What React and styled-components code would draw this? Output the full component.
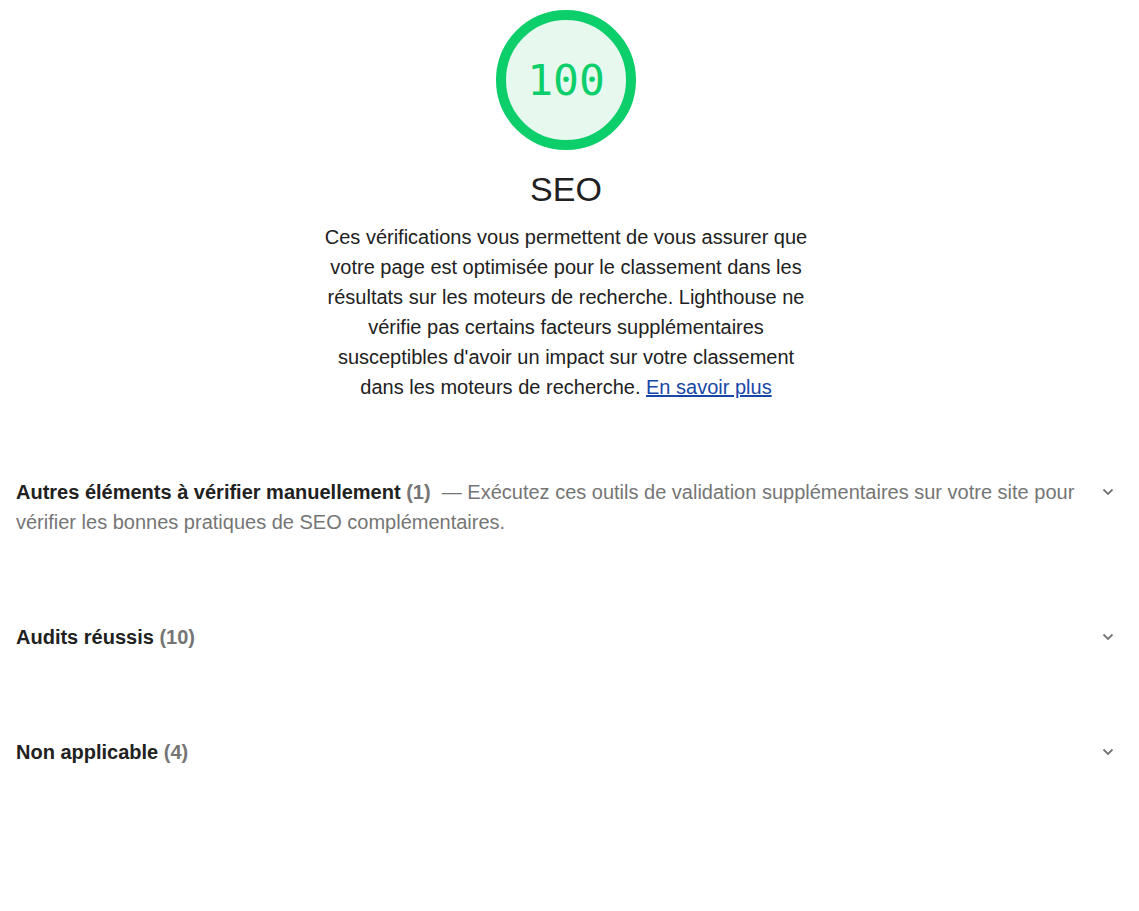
import React from "react";
import styled, { createGlobalStyle } from "styled-components";

const Global = createGlobalStyle`
  html, body { margin: 0; padding: 0; background: #fff; }
  body { font-family: "Liberation Sans", Arial, sans-serif; color: #212121; }
`;

const Page = styled.div`
  padding: 0 23px 0 16px;
  display: flex;
  flex-direction: column;
`;

const Header = styled.div`
  display: flex;
  flex-direction: column;
  align-items: center;
  padding-top: 10px;
`;

const Gauge = styled.div`
  width: 120px;
  height: 120px;
  border-radius: 50%;
  border: 10px solid #0cce6b;
  background: #e7f9ef;
  display: flex;
  align-items: center;
  justify-content: center;
  font-family: "DejaVu Sans Mono", "Liberation Mono", monospace;
  font-size: 43px;
  color: #0cce6b;
`;

const Title = styled.h2`
  margin: 19px 0 0;
  font-weight: 400;
  font-size: 34px;
  line-height: 40px;
  color: #212121;
`;

const Description = styled.p`
  margin: 13px 0 0;
  width: 496px;
  text-align: center;
  font-size: 20px;
  line-height: 30px;
  color: #212121;
`;

const Link = styled.a`
  color: #1747a6;
  text-decoration: underline;
`;

const Groups = styled.div`
  margin-top: 75px;
  display: flex;
  flex-direction: column;
  gap: 85px;
`;

const Group = styled.div`
  display: flex;
  align-items: flex-start;
  justify-content: space-between;
  gap: 20px;
`;

const GroupText = styled.div`
  font-size: 20px;
  line-height: 30px;
  color: #757575;
  max-width: 1068px;
`;

const GroupTitle = styled.span`
  font-weight: 700;
  color: #212121;
`;

const Count = styled.span`
  font-weight: 700;
  color: #757575;
`;

const Chevron = styled.svg`
  flex: none;
  margin-top: 11px;
  margin-right: 2px;
`;

const ChevronIcon = () => (
  <Chevron width="12" height="8" viewBox="0 0 12 8">
    <path d="M1.5 1.5 L6 6 L10.5 1.5" fill="none" stroke="#757575" strokeWidth="1.8" />
  </Chevron>
);

const groups = [
  {
    title: "Autres éléments à vérifier manuellement",
    count: 1,
    desc: "Exécutez ces outils de validation supplémentaires sur votre site pour vérifier les bonnes pratiques de SEO complémentaires.",
  },
  { title: "Audits réussis", count: 10 },
  { title: "Non applicable", count: 4 },
];

export default function App() {
  return (
    <Page>
      <Global />
      <Header>
        <Gauge>100</Gauge>
        <Title>SEO</Title>
        <Description>
          Ces vérifications vous permettent de vous assurer que votre page est optimisée pour le
          classement dans les résultats sur les moteurs de recherche. Lighthouse ne vérifie pas
          certains facteurs supplémentaires susceptibles d'avoir un impact sur votre classement
          dans les moteurs de recherche. <Link href="#">En savoir plus</Link>
        </Description>
      </Header>
      <Groups>
        {groups.map((g) => (
          <Group key={g.title}>
            <GroupText>
              <GroupTitle>{g.title}</GroupTitle> <Count>({g.count})</Count>
              {g.desc && <> &nbsp;— {g.desc}</>}
            </GroupText>
            <ChevronIcon />
          </Group>
        ))}
      </Groups>
    </Page>
  );
}
